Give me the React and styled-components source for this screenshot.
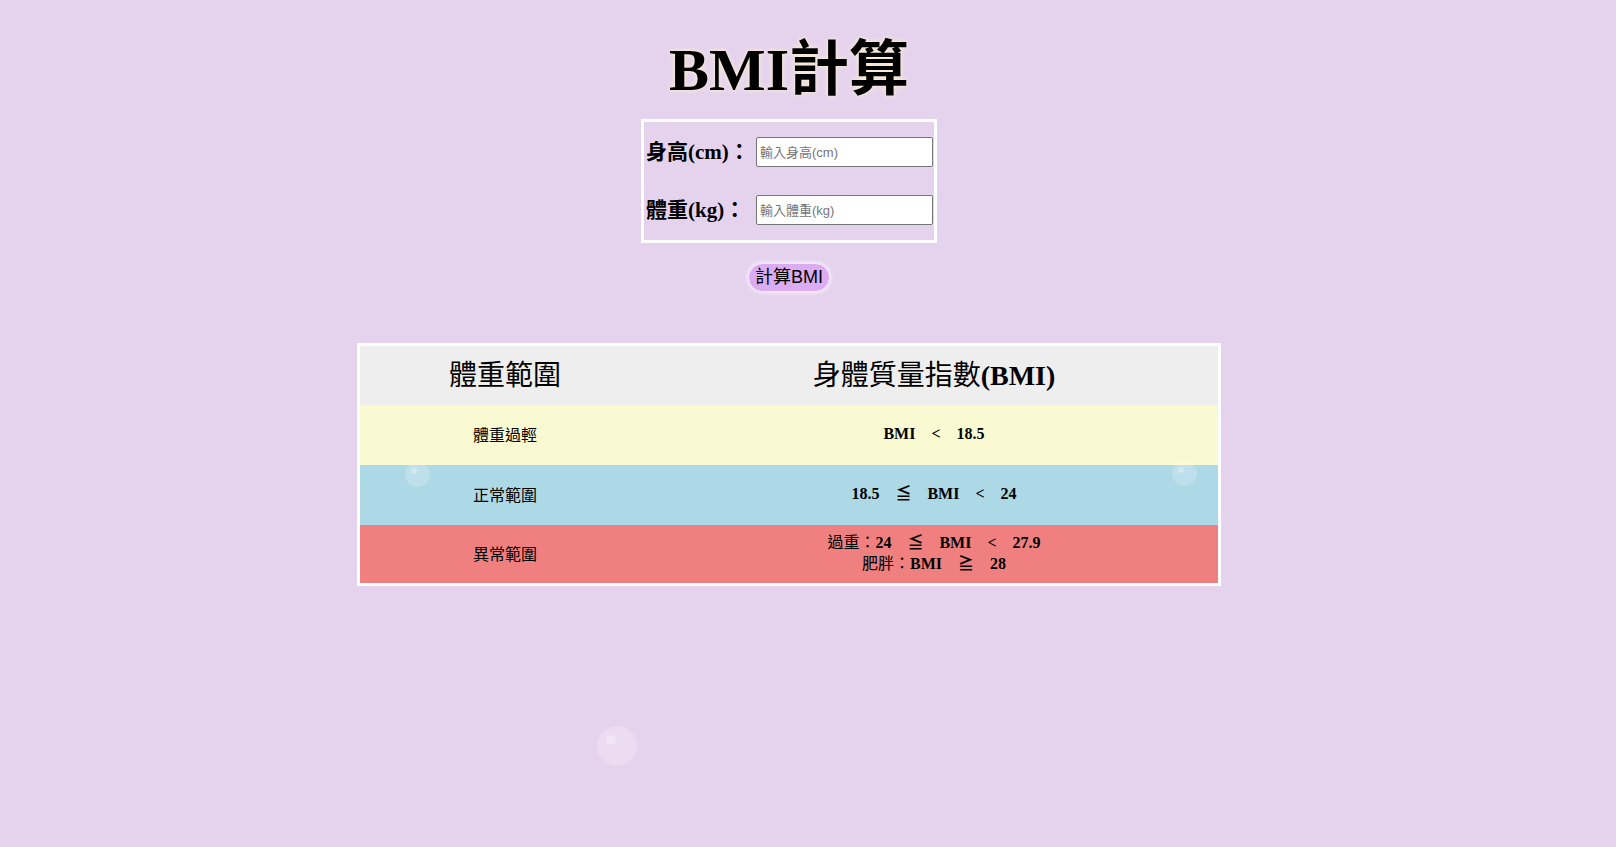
import React from 'react'
import styled, { createGlobalStyle } from 'styled-components'

const GlobalStyle = createGlobalStyle`
  html, body {
    margin: 0;
    padding: 0;
    background: #e5d3ee;
  }
  body {
    font-family: "Liberation Serif", "Noto Sans CJK TC", serif;
    color: #000;
  }
`

const bubbles = [
  { left: 405, top: 462, size: 25 },
  { left: 1172, top: 461, size: 25 },
  { left: 597, top: 726, size: 40 },
]

const rows = [
  { name: '體重過輕', tone: '#fafad2', lines: [[null, 'BMI　<　18.5']] },
  { name: '正常範圍', tone: '#add8e6', lines: [[null, '18.5　≦　BMI　<　24']] },
  {
    name: '異常範圍',
    tone: '#f08080',
    lines: [
      ['過重：', '24　≦　BMI　<　27.9'],
      ['肥胖：', 'BMI　≧　28'],
    ],
  },
]

function App() {
  return (
    <Page lang="zh-Hant-TW">
      <GlobalStyle />
      <Title>BMI計算</Title>
      <Form>
        <Label htmlFor="height">身高(cm)：</Label>
        <Input id="height" placeholder="輸入身高(cm)" />
        <Label htmlFor="weight">體重(kg)：</Label>
        <Input id="weight" placeholder="輸入體重(kg)" />
      </Form>
      <CalcButton>計算BMI</CalcButton>
      <Table>
        <thead>
          <tr>
            <Head style={{ width: 290 }}><Zh>體重範圍</Zh></Head>
            <Head><Zh>身體質量指數</Zh>(BMI)</Head>
          </tr>
        </thead>
        <tbody>
          {rows.map((r, i) => (
            <Row key={r.name} $tone={r.tone} $tall={i === 2}>
              <NameCell>{r.name}</NameCell>
              <RangeCell>
                {r.lines.map(([zh, txt], j) => (
                  <div key={j}>
                    {zh && <Zh>{zh}</Zh>}
                    {txt}
                  </div>
                ))}
              </RangeCell>
            </Row>
          ))}
        </tbody>
      </Table>
      {bubbles.map((b, i) => (
        <Bubble key={i} $size={b.size} style={{ left: b.left, top: b.top }} />
      ))}
    </Page>
  )
}

export default App

const Page = styled.div`
  position: relative;
  min-height: 100vh;
  box-sizing: border-box;
  padding: 35px 38px 0 0;
  display: flex;
  flex-direction: column;
  align-items: center;
`
const Title = styled.h1`
  margin: 0;
  font-size: 60px;
  line-height: 70px;
  font-weight: bold;
  text-shadow: 0 0 5px #fff6c8;
`
const Form = styled.div`
  margin-top: 14px;
  width: 296px;
  box-sizing: border-box;
  border: 3px solid #fff;
  padding: 15px 1px 15px 2px;
  display: grid;
  grid-template-columns: 1fr 177px;
  column-gap: 6px;
  row-gap: 28px;
  align-items: center;
`
const Label = styled.label`
  font-size: 21px;
  font-weight: bold;
  line-height: 24px;
  white-space: nowrap;
`
const Input = styled.input`
  width: 177px;
  height: 30px;
  box-sizing: border-box;
  border: 1px solid #767676;
  border-radius: 2px;
  padding: 1px 3px;
  background: #fff;
  font-family: "Liberation Sans", "Noto Sans CJK TC", sans-serif;
  font-size: 13px;
  &::placeholder {
    color: #757575;
  }
`
const CalcButton = styled.button`
  margin-top: 20px;
  height: 29px;
  padding: 0 6px;
  border: 1px solid #f4e8fa;
  border-radius: 15px;
  background: #dcacf2;
  box-shadow: 0 0 4px #fff;
  font-family: "Liberation Sans", "Noto Sans CJK TC", sans-serif;
  font-size: 18px;
  line-height: 25px;
  color: #000;
  cursor: pointer;
`
const Table = styled.table`
  margin-top: 51px;
  width: 864px;
  border: 3px solid #fff;
  border-spacing: 0;
  text-align: center;
`
const Head = styled.th`
  height: 59px;
  padding: 0;
  background: #eeeeee;
  font-size: 28px;
  line-height: 34px;
  font-weight: bold;
`
const Row = styled.tr`
  height: ${p => (p.$tall ? 58 : 60)}px;
  background: ${p => p.$tone};
`
const NameCell = styled.td`
  padding: 0 0 3px;
  font-size: 16px;
  font-weight: normal;
`
const RangeCell = styled.td`
  padding: 0 0 3px;
  font-size: 16px;
  line-height: 21px;
  font-weight: bold;
`
const Zh = styled.span`
  font-weight: normal;
`
const Bubble = styled.div`
  position: absolute;
  width: ${p => p.$size}px;
  height: ${p => p.$size}px;
  border-radius: 50%;
  background: radial-gradient(circle at 50% 50%, rgba(255, 255, 255, 0.2) 60%, rgba(255, 255, 255, 0.12) 100%);
  pointer-events: none;
  &::after {
    content: '';
    position: absolute;
    left: 22%;
    top: 22%;
    width: 25%;
    height: 25%;
    border-radius: 50%;
    background: rgba(255, 255, 255, 0.3);
  }
`
